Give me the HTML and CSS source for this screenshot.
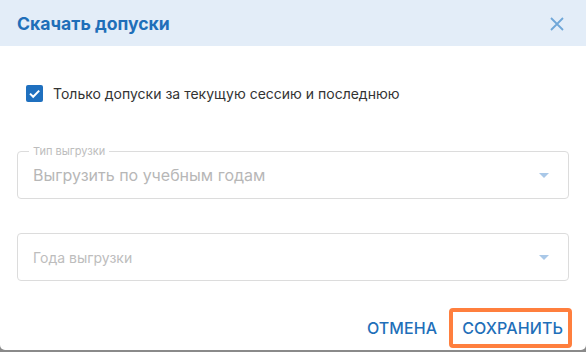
FILE: index.html
```html
<!DOCTYPE html>
<html lang="ru">
<head>
<meta charset="utf-8">
<link rel="stylesheet" href="styles.css">
</head>
<body>
<div class="dialog">
  <div class="header">
    <h2 class="title">Скачать допуски</h2>
    <button class="close" aria-label="Закрыть">
      <svg width="14" height="14" viewBox="0 0 14 14"><path d="M1 1L13 13M13 1L1 13" stroke="#6fa7d8" stroke-width="1.8" fill="none"/></svg>
    </button>
  </div>
  <div class="content">
    <label class="check">
      <span class="box"><svg width="17" height="17" viewBox="0 0 17 17"><path d="M4 8.6L7.2 11.8L13.2 5.6" stroke="#fff" stroke-width="2" fill="none"/></svg></span>
      <span class="check-label">Только допуски за текущую сессию и последнюю</span>
    </label>
    <div class="field filled">
      <span class="legend">Тип выгрузки</span>
      <span class="value">Выгрузить по учебным годам</span>
      <span class="arrow"></span>
    </div>
    <div class="field">
      <span class="placeholder">Года выгрузки</span>
      <span class="arrow"></span>
    </div>
  </div>
  <div class="actions">
    <button class="btn">Отмена</button>
    <button class="btn btn-save">Сохранить</button>
  </div>
</div>
</body>
</html>
```
FILE: styles.css
```css
* { box-sizing: border-box; }
html, body { margin: 0; padding: 0; }
body {
  background: #8a8a8a;
  font-family: Inter, "Noto Sans", sans-serif;
  width: 586px;
  height: 352px;
  overflow: hidden;
}
.dialog {
  width: 586px;
  height: 350px;
  background: #fff;
  border-radius: 0 0 5px 5px;
  display: flex;
  flex-direction: column;
  overflow: hidden;
}
.header {
  height: 46px;
  background: #e3edf8;
  display: flex;
  align-items: center;
  justify-content: space-between;
  padding: 0 22px 0 17px;
}
.title {
  margin: 0;
  font-size: 17.6px;
  font-weight: 700;
  color: #1f6fb9;
}
.close {
  border: 0;
  background: none;
  padding: 0;
  width: 14px;
  height: 14px;
  display: flex;
  margin-top: 2px;
}
.content {
  padding: 38px 17px 0 17px;
  display: flex;
  flex-direction: column;
}
.check {
  display: flex;
  align-items: center;
  gap: 10px;
  padding-left: 9px;
  height: 18px;
}
.box {
  width: 17px;
  height: 17px;
  border-radius: 2px;
  background: #1f70bf;
  display: flex;
}
.check-label {
  font-size: 14px;
  color: #333;
}
.field {
  position: relative;
  height: 48px;
  border: 1px solid #dcdcdc;
  border-radius: 4px;
  display: flex;
  align-items: center;
  padding-left: 15px;
}
.field.filled { margin-top: 49px; }
.field + .field { margin-top: 34px; }
.legend {
  position: absolute;
  top: -8px;
  left: 11px;
  background: #fff;
  padding: 0 4px;
  font-size: 11px;
  color: #bdbdbd;
}
.value {
  font-size: 16px;
  color: #b7b7b7;
}
.placeholder {
  font-size: 14px;
  color: #bdbdbd;
}
.arrow {
  position: absolute;
  right: 19px;
  top: 21px;
  width: 0;
  height: 0;
  border-left: 5px solid transparent;
  border-right: 5px solid transparent;
  border-top: 5px solid #a9c8e8;
}
.actions {
  margin-top: auto;
  display: flex;
  justify-content: flex-end;
  align-items: center;
  gap: 12px;
  padding: 0 14px 2px 0;
}
.btn {
  border: 0;
  background: none;
  font-family: Inter, "Noto Sans", sans-serif;
  font-size: 16px;
  font-weight: 500;
  letter-spacing: 0.1px;
  text-transform: uppercase;
  color: #1f6fb9;
  padding: 6px 0;
  line-height: 20px;
  cursor: pointer;
}
.btn-save {
  border: 4px solid #ff7f3e;
  border-radius: 4px;
  padding: 6px 5px 6px 9px;
}
```
